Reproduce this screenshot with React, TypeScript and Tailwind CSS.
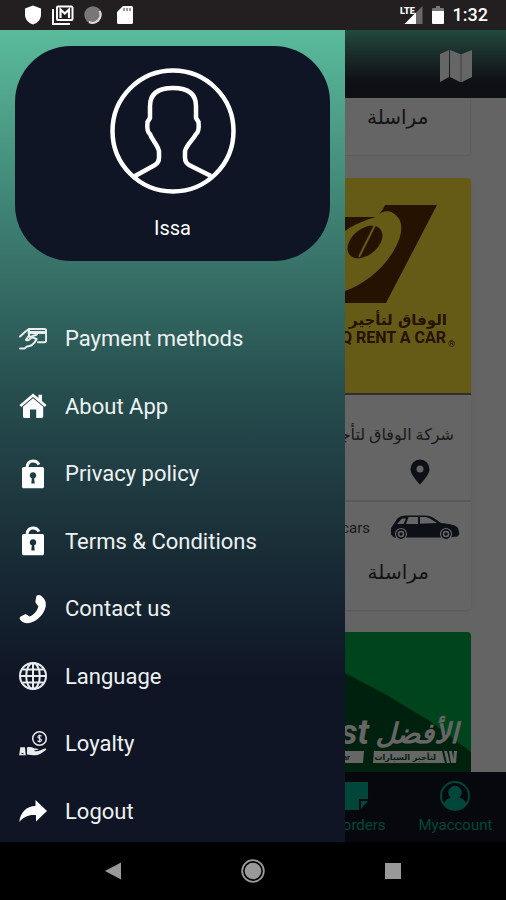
import type { ReactNode } from "react";

const ui = "font-['Roboto','DejaVu_Sans',sans-serif]";

function PaymentIcon() {
  return (
    <svg viewBox="0 0 28 28" className="h-7 w-7" fill="none" stroke="#e8eeee" strokeWidth="2" strokeLinecap="round" strokeLinejoin="round">
      <path d="M10 4h15.500c1 0 1.600.7 1.600 1.600v10c0 1-.6 1.700-1.600 1.700h-6.500" />
      <path d="M10 7.500h17" strokeWidth="3" />
      <path d="M1 11.500 6.500 6.500 10 4M10 5.500v5l-3 4.300c2 1.200 4-.3 5.500-2.800L17.500 14M18 9.500l-7 2.500M17.500 14.500C14.500 20 11.500 21.500 8 21.500L5.500 23.500H1" />
    </svg>
  );
}

function HomeIcon() {
  return (
    <svg viewBox="0 0 28 28" className="h-7 w-7" fill="#fff">
      <path d="M14 1.500 0.500 13l1.700 2L14 5l11.800 10 1.700-2-4.500-4V2.800h-3.500v3.200z" />
      <path d="M14 6.200 4 14.800V24.500c0 .8.600 1.400 1.400 1.400H11v-8.400h6.200v8.400h5.600c.8 0 1.400-.6 1.400-1.400v-9.700z" />
    </svg>
  );
}

function LockIcon() {
  return (
    <svg viewBox="0 0 28 30" className="h-[30px] w-7" fill="#fff">
      <path d="M8 8c.5-3.500 2.700-6 6-6 2.800 0 5 1.600 5.900 3.600" fill="none" stroke="#fff" strokeWidth="2.800" />
      <path fillRule="evenodd" d="M4.500 8h19c.8 0 1.500.7 1.500 1.500v18.200c0 .8-.7 1.500-1.500 1.500h-19c-.8 0-1.500-.7-1.500-1.500V9.500C3 8.700 3.700 8 4.500 8zM14 13.200a3.100 3.100 0 0 0-1.200 6l-.5 5.300h3.400l-.5-5.300a3.100 3.100 0 0 0-1.200-6z" />
    </svg>
  );
}

function PhoneIcon() {
  return (
    <svg viewBox="0 0 28 30" className="h-[30px] w-7" fill="#fff">
      <path d="M17.500 1.800c1.600-1.300 3.700-1 5.200.4 3.400 3 4.900 6.300 3.900 10.800-1.600 7-7.600 13.400-14.500 15.600-4.300 1.300-7.700.6-10.700-2.600-1-1.200-.9-2.700.2-3.500l3.600-1.800c1-.6 2.200-.4 3 .3l2.200 1.600c4.300-1.600 7.500-5.400 9-10.200l-2-2.600c-.9-.8-1.200-1.900-.9-3z" />
    </svg>
  );
}

function GlobeIcon() {
  return (
    <svg viewBox="0 0 28 28" className="h-7 w-7" fill="none" stroke="#e8ebee" strokeWidth="2">
      <circle cx="14" cy="14" r="13" />
      <ellipse cx="14" cy="14" rx="6.800" ry="13" />
      <path d="M14 1v26M1 14h26M3.500 7.500h21M3.500 20.500h21" />
    </svg>
  );
}

function LoyaltyIcon() {
  return (
    <svg viewBox="0 0 28 28" className="h-7 w-7" fill="#e8ebee">
      <circle cx="20.500" cy="8.500" r="6.800" fill="none" stroke="#e8ebee" strokeWidth="1.500" />
      <path d="M22.600 6.300c-.6-1-3.700-1.200-3.700.6s3.700 1.200 3.700 3.200-3.300 1.700-4 .5M20.700 4.500v8" fill="none" stroke="#e8ebee" strokeWidth="1.100" />
      <path d="M1.300 17.300H6l.8 8H.2zM8 17.500c3-1 5-.4 7.500.9 2 .2 3.800-.1 4.300 1.200l-4.800.9 1 .8c3.700.2 7-1.900 10-2.800 1.300-.2 1.800.7.8 1.500-3.800 3.200-7.300 5.700-12.500 5.300L8 24.500z" />
      <path d="M2.500 23.500h2" stroke="#101828" />
    </svg>
  );
}

function LogoutIcon() {
  return (
    <svg viewBox="0 0 28 28" className="h-7 w-7" fill="#fff">
      <path d="M16.500 3 28 14 17 24.500v-6.300C10 17.500 5 19.500.3 25 1.300 15.500 7.500 9 16.500 9z" />
    </svg>
  );
}

const menu: { label: string; icon: ReactNode }[] = [
  { label: "Payment methods", icon: <PaymentIcon /> },
  { label: "About App", icon: <HomeIcon /> },
  { label: "Privacy policy", icon: <LockIcon /> },
  { label: "Terms & Conditions", icon: <LockIcon /> },
  { label: "Contact us", icon: <PhoneIcon /> },
  { label: "Language", icon: <GlobeIcon /> },
  { label: "Loyalty", icon: <LoyaltyIcon /> },
  { label: "Logout", icon: <LogoutIcon /> },
];

function StatusBar() {
  return (
    <div className="flex h-[30px] shrink-0 items-center justify-between bg-[#231f20] pr-[18px] pl-6">
      <div className="flex items-center gap-[10px]">
        <svg viewBox="0 0 18 20" className="h-5 w-[18px]" fill="#fff">
          <path d="M9 .5 17 3.500v6c0 4.500-3 8.500-8 10-5-1.500-8-5.500-8-10v-6z" />
        </svg>
        <svg viewBox="0 0 22 20" className="h-5 w-[22px]">
          <path d="M1 4v15h17" fill="none" stroke="#fff" strokeWidth="2" />
          <rect x="5" y="1.500" width="15.500" height="13.500" rx="1" fill="none" stroke="#fff" strokeWidth="2" />
          <path d="M8.500 13V4.500l4.300 4L17 4.500V13" fill="none" stroke="#fff" strokeWidth="2.200" />
        </svg>
        <svg viewBox="0 0 18 18" className="h-[18px] w-[18px]">
          <circle cx="9" cy="9" r="8.700" fill="#777" />
          <path d="M15.500 5A8 8 0 0 1 5 16" fill="none" stroke="#ddd" strokeWidth="2" />
        </svg>
        <svg viewBox="0 0 18 20" className="ml-1 h-5 w-[18px]" fill="#fff">
          <path d="M7 1h8.500c.9 0 1.500.6 1.500 1.500v15c0 .9-.6 1.500-1.500 1.500h-13C1.600 19 1 18.400 1 17.500V7z" />
          <path d="M8 3v3M11 3v3M14 3v3" stroke="#777" strokeWidth="1.500" />
        </svg>
      </div>
      <div className="flex items-center gap-[9px]">
        <svg viewBox="0 0 23 20" className="h-5 w-[23px]">
          <path d="M22.500 1v18H4.500z" fill="#6b6869" />
          <path d="M16 7.500V19H4.500z" fill="#fff" />
          <text x="0" y="9" fontSize="9" fontWeight="900" fill="#fff" className="font-['Roboto',sans-serif]">LTE</text>
        </svg>
        <svg viewBox="0 0 12 20" className="h-5 w-3">
          <path d="M4 1h4v2h3a1 1 0 0 1 1 1v3H0V4a1 1 0 0 1 1-1h3z" fill="#777" />
          <path d="M0 6h12v12a1 1 0 0 1-1 1H1a1 1 0 0 1-1-1z" fill="#fff" />
        </svg>
        <span className="text-lg leading-5 font-medium text-white">1:32</span>
      </div>
    </div>
  );
}

function MessageRow() {
  return (
    <div className="grid grid-cols-3">
      <a href="#chat" dir="rtl" className="col-start-3 text-center text-xl leading-7 text-[#333]">مراسلة</a>
    </div>
  );
}

function WefaqLogo() {
  return (
    <svg viewBox="0 0 436 215" className="h-[215px] w-full bg-[#fee439]" preserveAspectRatio="xMaxYMid slice">
      <path d="M350 27h52l-51 98H240V39h102l6-8z" fill="#5e2d00" />
      <path d="M341 39C346 33 353 32 358 35c13 8 9 24 0 39-12 19-29 32-48 39l-60 5V60l60-7c8-6 20-11 31-14z" fill="#fee439" />
      <ellipse cx="330" cy="64" rx="20" ry="13" transform="rotate(-40 330 64)" fill="#5e2d00" />
      <path d="m341 45-17 34" stroke="#fee439" strokeWidth="2" />
      <g fill="#5e2d00" fontWeight="700">
        <text x="412" y="147" fontSize="15" textAnchor="start" direction="rtl" className="font-['DejaVu_Sans',sans-serif]">الوفاق لتأجير السيارات</text>
        <text x="411" y="165" fontSize="16" textAnchor="end" className="font-['Roboto',sans-serif]">ALWEFAQ RENT A CAR</text>
        <text x="413" y="169" fontSize="9" className="font-['Roboto',sans-serif]">®</text>
      </g>
    </svg>
  );
}

function BestLogo() {
  return (
    <svg viewBox="0 0 436 215" className="h-[215px] w-full rounded-t bg-[#00aa4d]" preserveAspectRatio="xMaxYMid slice">
      <path d="M260 18 310 41 350 62 395 89 436 120V215H260z" fill="#035426" />
      <g fill="#fff" fontWeight="700" fontStyle="italic">
        <text x="423" y="111" fontSize="28" textAnchor="start" direction="rtl" className="font-['DejaVu_Sans',sans-serif]">الأفضل</text>
        <text x="334" y="112" fontSize="35" textAnchor="end" className="font-['Roboto',sans-serif]">Best</text>
      </g>
      <path d="M339 119h68l3 12h-72zM250 119h79l-1 12h-78zM409 119h3l3 12h-3zM414 119h3l2 12h-3zM419 119h3l-1 12h-3z" fill="#fff" />
      <text x="401" y="128" fontSize="8" fontWeight="700" textAnchor="start" direction="rtl" fill="#035426" className="font-['DejaVu_Sans',sans-serif]">لتأجير السيارات</text>
      <text x="315" y="128" fontSize="8" fontWeight="700" textAnchor="end" fill="#035426" className="font-['Roboto',sans-serif]">rent a car</text>
    </svg>
  );
}

function CarIcon() {
  return (
    <svg viewBox="0 0 70 28" className="h-7 w-[70px]">
      <path d="M1 14 7 5C9 2.500 12 1.500 17 1.500h18c6 0 10 3 16 7.500 8 .7 15 2 17 5l1.500 6-2 2.500-9 1H4l-3-3z" fill="#25293a" />
      <path d="m7 10 5-5.500h4L13.500 10zm9 0 2.500-7H28v7zm14-7h6c4 1 7 3.500 11 6l-17 .8z" fill="#fff" />
      <g fill="#25293a" stroke="#fff" strokeWidth="1.200">
        <circle cx="11" cy="20" r="5.500" />
        <circle cx="56" cy="20" r="5.500" />
      </g>
      <g fill="none" stroke="#fff" strokeWidth="1.500">
        <circle cx="11" cy="20" r="2.500" />
        <circle cx="56" cy="20" r="2.500" />
      </g>
    </svg>
  );
}

function CompanyList() {
  return (
    <div className="flex min-h-0 flex-1 flex-col gap-[22px] overflow-hidden bg-[#fafafa] px-[35px]">
      <section className="h-[58px] shrink-0 rounded-b border border-t-0 border-[#ececec] bg-[#fcfcfc] pt-[5px]">
        <MessageRow />
      </section>
      <section className="shrink-0 overflow-hidden rounded bg-[#fcfcfc] shadow-sm">
        <WefaqLogo />
        <div className="flex h-[107px] flex-col items-end gap-3 border-t-2 border-[#777] pt-7 pr-[17px]">
          <h2 dir="rtl" className="text-base leading-6 text-[#444]">شركة الوفاق لتأجير السيارات</h2>
          <svg viewBox="0 0 20 26" className="mr-6 h-[26px] w-5">
            <path fillRule="evenodd" d="M10 .5A9.500 9.500 0 0 0 .5 10c0 5 5.500 11 9.500 15.500C14 21 19.500 15 19.500 10A9.500 9.500 0 0 0 10 .5zm0 6a3.500 3.500 0 1 1 0 7 3.500 3.500 0 0 1 0-7z" fill="#25293a" />
          </svg>
        </div>
        <div className="h-[110px] border-t-2 border-[#e2e2e2] pt-3">
          <div className="mb-4 flex items-center justify-end gap-5 pr-[11px]">
            <span className="text-[15px] leading-7 text-[#444]">16 cars</span>
            <CarIcon />
          </div>
          <MessageRow />
        </div>
      </section>
      <section className="shrink-0">
        <BestLogo />
      </section>
    </div>
  );
}

function TabBar() {
  return (
    <div className="grid h-[70px] shrink-0 grid-cols-5 bg-[#0f1424] pt-[9px] text-[15px] text-[#00ae94]">
      <a href="#orders" className="col-start-4 flex flex-col items-center gap-1">
        <svg viewBox="0 0 28 30" className="h-[30px] w-7" fill="currentColor">
          <path d="M0 1h28v17h-9v11H0zM21 20h7l-7 8z" />
        </svg>
        <span className="leading-5">Myorders</span>
      </a>
      <a href="#account" className="flex flex-col items-center gap-1">
        <svg viewBox="0 0 30 30" className="h-[30px] w-[30px]" fill="currentColor">
          <circle cx="15" cy="15" r="14" fill="none" stroke="currentColor" strokeWidth="2" />
          <circle cx="15" cy="11.500" r="6.800" />
          <path d="M4 23c1-4 4-6 7-6h8c3 0 6 2 7 6-6 8-16 8-22 0z" />
        </svg>
        <span className="leading-5">Myaccount</span>
      </a>
    </div>
  );
}

function Drawer() {
  return (
    <aside className="absolute inset-y-0 left-0 w-[345px] overflow-hidden bg-linear-to-b from-[#5abb9b] via-[#264d4e] via-45% to-[#0f1525] to-80% px-[15px] pt-4">
      <div className="flex h-[215px] flex-col items-center rounded-[56px] bg-[#0f1524] pt-[22px]">
        <svg viewBox="0 0 126 126" className="h-[126px] w-[126px]" fill="none" stroke="#fff" strokeWidth="4.500" strokeLinejoin="round">
          <circle cx="63" cy="63" r="60.500" />
          <path d="M25 108 45 97C48 95 49 93 49 90V83C47 76 42 72 40 66C37 64 37 59 37.500 54L40 50V38C40 26 48 20 63 20S86 26 86 38V50L88.500 54C89 59 89 64 86 66C83 72 77 76 75 83V90C75 93 76 95 79 97L101 108" />
        </svg>
        <p className="mt-5 text-xl leading-7 text-white">Issa</p>
      </div>
      <nav className="mt-11 grid h-[540px] grid-rows-8">
        {menu.map(({ label, icon }) => (
          <button key={label} type="button" className="flex items-center gap-[18px] pl-1 text-left text-[22px] text-[#eef2f2]">
            {icon}
            {label}
          </button>
        ))}
      </nav>
    </aside>
  );
}

function SystemNav() {
  return (
    <div className="flex h-[58px] shrink-0 items-center justify-center gap-[116px] bg-black">
      <button type="button" aria-label="Back">
        <svg viewBox="0 0 24 24" className="h-6 w-6" fill="#999"><path d="M20 3.500v17L4 12z" /></svg>
      </button>
      <button type="button" aria-label="Home">
        <svg viewBox="0 0 24 24" className="h-6 w-6">
          <circle cx="12" cy="12" r="10.800" fill="none" stroke="#999" strokeWidth="1.800" />
          <circle cx="12" cy="12" r="8.300" fill="#999" />
        </svg>
      </button>
      <button type="button" aria-label="Recent apps">
        <svg viewBox="0 0 24 24" className="h-6 w-6" fill="#999"><path d="M4 4h16v16H4z" /></svg>
      </button>
    </div>
  );
}

export default function App() {
  return (
    <div className={`flex h-screen flex-col overflow-hidden ${ui}`}>
      <StatusBar />
      <main className="relative flex min-h-0 flex-1 flex-col">
        <header className="flex h-[68px] shrink-0 items-center justify-end bg-linear-to-b from-[#55b899] to-[#262a38] to-75% pr-[34px]">
          <svg viewBox="0 0 32 32" className="mt-1 h-8 w-8" fill="#fff">
            <path d="M0 4 9 0v27L0 32zM10 0l10 4v28l-10-5zM22 4l10-4v27l-10 5z" />
            <path d="m20 4 2 0v28h-2z" fill="#ccc" />
          </svg>
        </header>
        <CompanyList />
        <TabBar />
        <div className="absolute inset-0 bg-black/60" />
        <Drawer />
      </main>
      <SystemNav />
    </div>
  );
}
